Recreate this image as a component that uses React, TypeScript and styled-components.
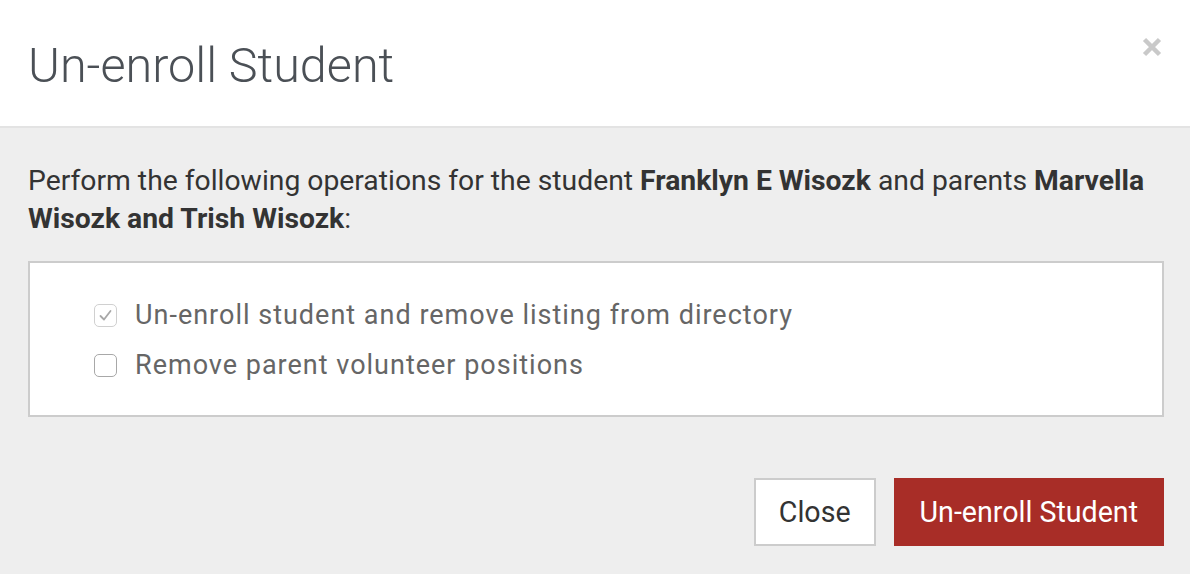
import React, { useState } from "react";
import styled, { createGlobalStyle } from "styled-components";

const GlobalStyle = createGlobalStyle`
    html, body {
        margin: 0;
        padding: 0;
        height: 100%;
    }
    body {
        font-family: Roboto, "Liberation Sans", Arial, sans-serif;
        background: #eeeeee;
    }
`;

const Modal = styled.div`
    width: 1190px;
    height: 574px;
    display: flex;
    flex-direction: column;
    background: #eeeeee;
`;

const Header = styled.header`
    height: 128px;
    box-sizing: border-box;
    padding: 0 28px 0 28px;
    background: #ffffff;
    border-bottom: 2px solid #e3e3e3;
    display: flex;
    align-items: center;
    justify-content: space-between;
`;

const Title = styled.h4`
    margin: 0;
    font-size: 48.5px;
    font-weight: 300;
    color: #4b5056;
    padding-top: 4px;
`;

const CloseX = styled.button`
    border: 0;
    background: transparent;
    padding: 0;
    width: 20px;
    height: 20px;
    margin-top: -32px;
    margin-right: 0;
    cursor: pointer;
    display: flex;
`;

const Body = styled.div`
    padding: 34px 26px 0 28px;
`;

const Lead = styled.p`
    margin: 0 0 23px 0;
    font-size: 28.3px;
    line-height: 38px;
    color: #333333;
    strong {
        font-weight: 700;
    }
`;

const OptionBox = styled.div`
    background: #ffffff;
    border: 2px solid #cccccc;
    height: 156px;
    box-sizing: border-box;
    padding: 41px 0 0 64px;
    display: flex;
    flex-direction: column;
    gap: 27px;
`;

const Option = styled.label`
    display: flex;
    align-items: center;
    gap: 18px;
    font-size: 27px;
    letter-spacing: 1px;
    color: #666666;
    line-height: 23px;
    cursor: pointer;
`;

const Box = styled.span<{ $checked: boolean; $disabled?: boolean }>`
    width: 23px;
    height: 23px;
    box-sizing: border-box;
    border-radius: 5px;
    background: #ffffff;
    border: 1.5px solid ${p => (p.$disabled ? "#d0d0d0" : "#a8a8a8")};
    display: flex;
    align-items: center;
    justify-content: center;
    flex-shrink: 0;
`;

const Footer = styled.div`
    display: flex;
    justify-content: flex-end;
    gap: 18px;
    padding: 61px 26px 0 0;
`;

const Button = styled.button<{ $primary?: boolean }>`
    height: 68px;
    box-sizing: border-box;
    font-family: Roboto, "Liberation Sans", Arial, sans-serif;
    font-size: 28.6px;
    font-weight: 400;
    padding: 0 ${p => (p.$primary ? "24px" : "23px")};
    border-radius: 0;
    cursor: pointer;
    background: ${p => (p.$primary ? "#a82d27" : "#ffffff")};
    color: ${p => (p.$primary ? "#ffffff" : "#333333")};
    border: 2px solid ${p => (p.$primary ? "#a82d27" : "#cccccc")};
`;

const Check = ({ checked, disabled, onToggle }: { checked: boolean; disabled?: boolean; onToggle?: () => void }) => (
    <Box $checked={checked} $disabled={disabled} onClick={onToggle}>
        {checked && (
            <svg width="15" height="15" viewBox="0 0 15 15">
                <path d="M2.5 8 L6 11.5 L12.5 3" fill="none" stroke="#a8a8a8" strokeWidth="1.8" strokeLinecap="round" strokeLinejoin="round" />
            </svg>
        )}
    </Box>
);

const App = () => {
    const [removeVolunteer, setRemoveVolunteer] = useState(false);

    return (
        <Modal>
            <GlobalStyle />
            <Header>
                <Title>Un-enroll Student</Title>
                <CloseX aria-label="Close">
                    <svg width="20" height="20" viewBox="0 0 20 20">
                        <path d="M2.5 2.5 L17.5 17.5 M17.5 2.5 L2.5 17.5" stroke="#c9c9c9" strokeWidth="4.5" />
                    </svg>
                </CloseX>
            </Header>
            <Body>
                <Lead>
                    Perform the following operations for the student <strong>Franklyn E Wisozk</strong> and parents{" "}
                    <strong>Marvella Wisozk and Trish Wisozk</strong>:
                </Lead>
                <OptionBox>
                    <Option>
                        <Check checked disabled />
                        Un-enroll student and remove listing from directory
                    </Option>
                    <Option>
                        <Check checked={removeVolunteer} onToggle={() => setRemoveVolunteer(!removeVolunteer)} />
                        Remove parent volunteer positions
                    </Option>
                </OptionBox>
            </Body>
            <Footer>
                <Button>Close</Button>
                <Button $primary>Un-enroll Student</Button>
            </Footer>
        </Modal>
    );
};

export default App;
